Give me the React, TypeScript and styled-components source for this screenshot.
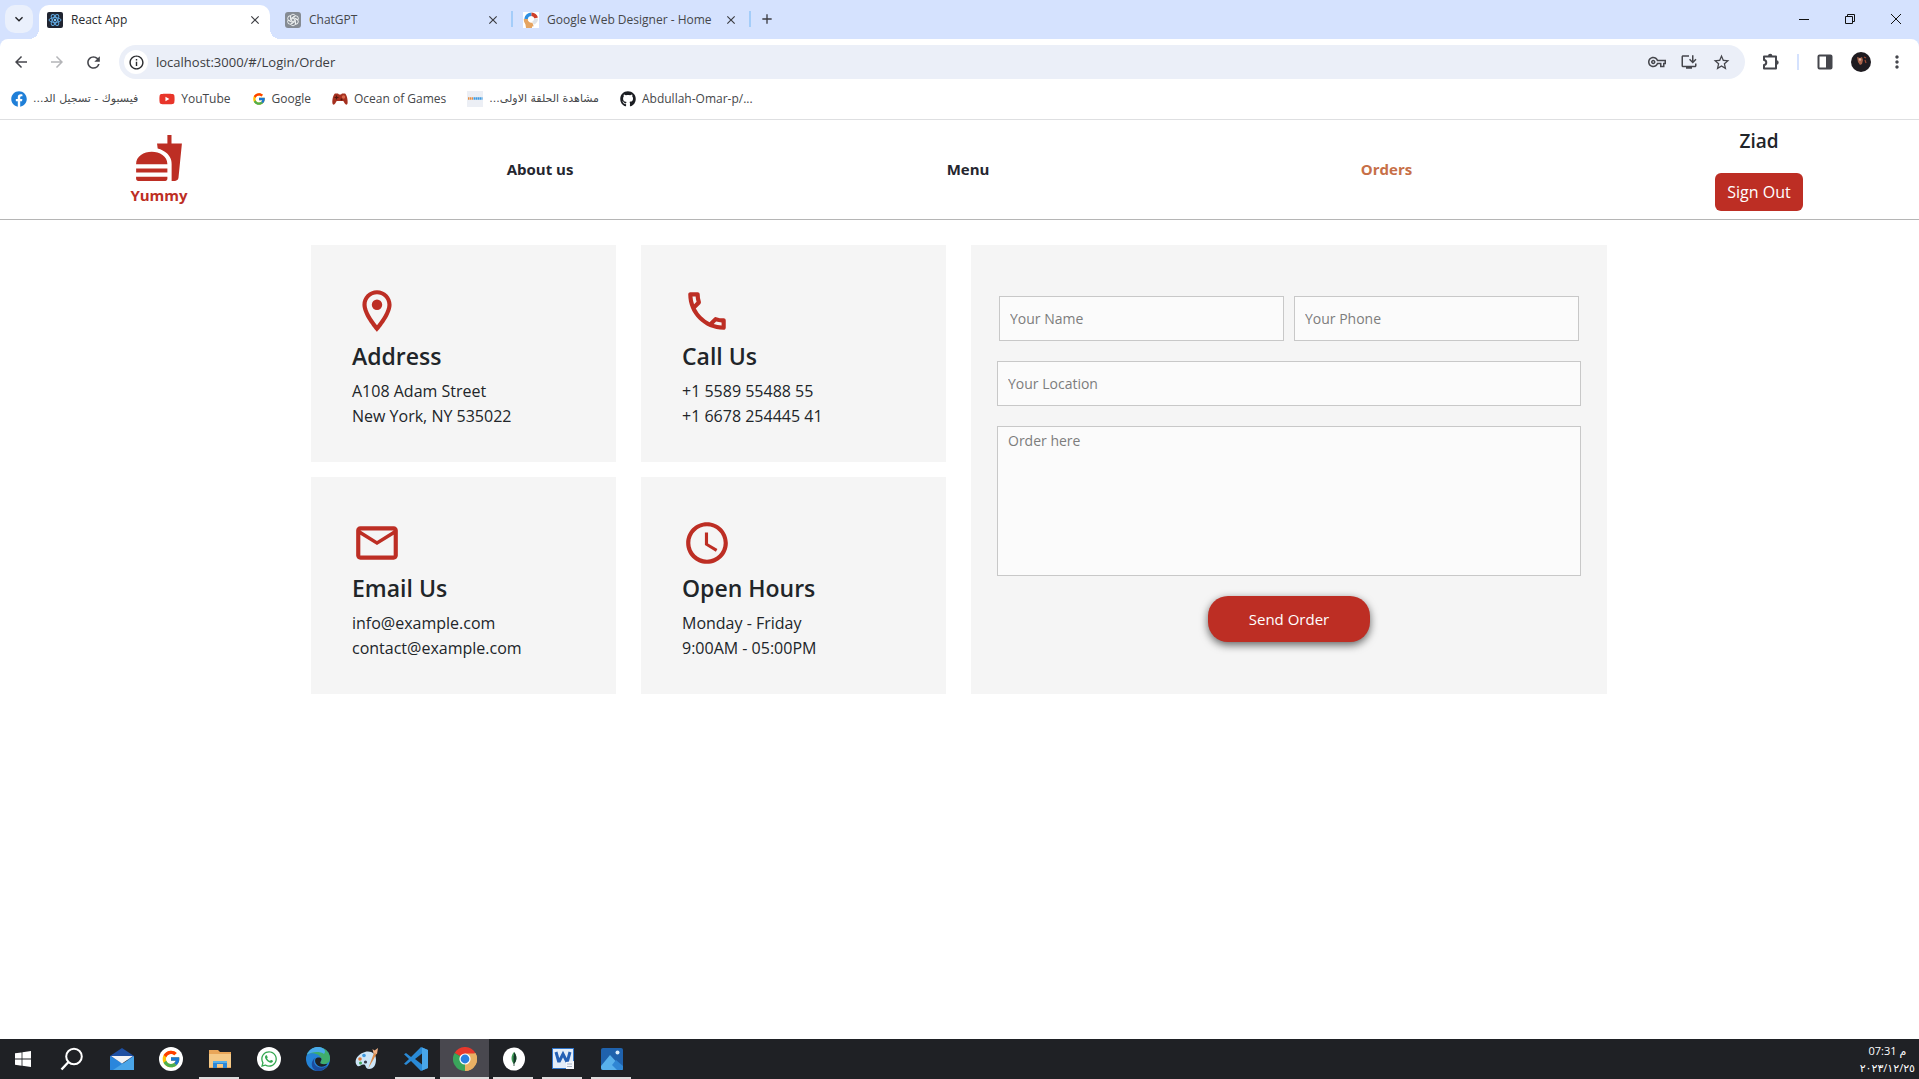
import React from "react";
import styled, { createGlobalStyle, css } from "styled-components";
import {
  MdArrowBack,
  MdArrowForward,
  MdRefresh,
  MdInfoOutline,
  MdKeyboardArrowDown,
  MdClose,
  MdAdd,
  MdStarOutline,
  MdMoreVert,
  MdFastfood,
  MdOutlineLocationOn,
  MdOutlinePhone,
  MdOutlineEmail,
  MdAccessTime,
  MdOutlineVpnKey,
  MdOutlineInstallDesktop,
} from "react-icons/md";
import { FaWhatsapp, FaFacebook, FaYoutube, FaGithub } from "react-icons/fa";
import { FcGoogle } from "react-icons/fc";

const red = "#bd2e24";
const ink = "#212529";
const panel = "#f5f5f5";
const sans = `"Segoe UI", "Open Sans", "Noto Sans", "DejaVu Sans", sans-serif`;

const GlobalStyle = createGlobalStyle`
  * { box-sizing: border-box; }
  body { margin: 0; background: #fff; font-family: ${sans}; color: ${ink}; }
  button, input, textarea { font-family: inherit; margin: 0; }
  button { border: 0; padding: 0; background: none; color: inherit; cursor: pointer; }
  h1, h2, p { margin: 0; }
  a { color: inherit; text-decoration: none; }
  svg { display: block; flex: none; }
`;

const Screen = styled.div`
  display: flex;
  flex-direction: column;
  min-height: 100vh;
`;

/* ---------- browser window ---------- */

const TabStrip = styled.div`
  display: flex;
  height: 39px;
  padding: 5px 0 0 5px;
  background: #d5e2fe;
`;

const TabSearch = styled.button`
  display: grid;
  place-items: center;
  width: 28px;
  height: 28px;
  margin-right: 6px;
  border-radius: 10px;
  background: #eaf0fc;
  color: #202124;
`;

const Tab = styled.div<{ $active?: boolean }>`
  position: relative;
  display: flex;
  align-items: center;
  gap: 8px;
  width: 231px;
  height: 34px;
  padding: 0 7px 5px 8px;
  border-radius: 10px 10px 0 0;
  font-size: 12px;
  color: #45474a;
  ${(p) =>
    p.$active &&
    css`
      background: #fff;
      color: #2a2b2e;
      &::before,
      &::after {
        content: "";
        position: absolute;
        bottom: 0;
        width: 10px;
        height: 10px;
      }
      &::before {
        left: -10px;
        background: radial-gradient(circle at 0 0, transparent 10px, #fff 10px);
      }
      &::after {
        right: -10px;
        background: radial-gradient(circle at 100% 0, transparent 10px, #fff 10px);
      }
    `}
`;

const TabTitle = styled.span`
  flex: 1;
  white-space: nowrap;
`;

const TabClose = styled.button`
  display: grid;
  place-items: center;
  width: 16px;
  height: 16px;
  color: #3c3d42;
`;

const TabGap = styled.span<{ $line?: boolean }>`
  width: 2px;
  height: 16px;
  margin: 6px 2px 0 3px;
  background: ${(p) => (p.$line ? "#a4cdf9" : "transparent")};
`;

const NewTab = styled.button`
  display: grid;
  place-items: center;
  width: 28px;
  height: 28px;
  color: #3c3d42;
`;

const WindowButtons = styled.div`
  display: flex;
  margin-left: auto;
  button {
    display: grid;
    place-items: center;
    width: 46px;
    height: 28px;
  }
`;

const ToolbarBack = styled.div`
  background: #d5e2fe;
`;

const Toolbar = styled.div`
  display: flex;
  align-items: center;
  height: 46px;
  padding-left: 3px;
  padding-right: 4px;
  border-radius: 8px 8px 0 0;
  background: #fff;
`;

const ToolButton = styled.button<{ $faded?: boolean }>`
  display: grid;
  place-items: center;
  width: 36px;
  height: 34px;
  color: ${(p) => (p.$faded ? "#b4b5b8" : "#45464c")};
`;

const Omnibox = styled.form`
  display: flex;
  flex: 1;
  align-items: center;
  height: 34px;
  margin: 0 8px;
  padding: 0 8px 0 5px;
  border-radius: 17px;
  background: #ebeff8;
`;

const SiteInfo = styled.button`
  display: grid;
  place-items: center;
  width: 24px;
  height: 24px;
  border-radius: 50%;
  background: #fff;
  color: #2a2b2e;
`;

const Url = styled.input`
  flex: 1;
  min-width: 0;
  padding: 0 8px;
  border: 0;
  outline: 0;
  background: none;
  font-size: 13px;
  color: #3c3d42;
`;

const OmniButton = styled(ToolButton)`
  width: 32px;
`;

const ToolLine = styled.span`
  width: 2px;
  height: 16px;
  margin: 0 8px;
  background: #d5e2fe;
`;

const Bookmarks = styled.nav`
  display: flex;
  align-items: center;
  gap: 21px;
  height: 35px;
  padding: 0 11px 6px;
  border-bottom: 1px solid #dedfe1;
`;

const Bookmark = styled.a`
  display: flex;
  align-items: center;
  gap: 6px;
  font-size: 12px;
  line-height: 16px;
  color: #45474a;
  white-space: nowrap;
`;

const ArabicLabel = styled.span`
  font-family: "DejaVu Sans", sans-serif;
  font-size: 11px;
`;

/* ---------- site header ---------- */

const Header = styled.header`
  display: grid;
  grid-template-columns: 318fr 444fr 412fr 425fr 320fr;
  align-items: center;
  justify-items: center;
  height: 100px;
  border-bottom: 1px solid #b5b5b5;
`;

const Brand = styled.a`
  display: flex;
  flex-direction: column;
  align-items: center;
  font-size: 15px;
  line-height: 24px;
  font-weight: 700;
  color: ${red};
`;

const NavLink = styled.a<{ $active?: boolean }>`
  padding-bottom: 2px;
  font-size: 15px;
  line-height: 24px;
  font-weight: 700;
  color: ${(p) => (p.$active ? "#c76f47" : "#25262f")};
`;

const Account = styled.div`
  display: flex;
  flex-direction: column;
  align-items: center;
  gap: 20px;
`;

const UserName = styled.span`
  font-size: 19px;
  line-height: 24px;
  font-weight: 600;
`;

const SignOut = styled.button`
  height: 38px;
  padding: 0 12px;
  border-radius: 6px;
  background: ${red};
  color: #fff;
  font-size: 16px;
`;

/* ---------- contact page ---------- */

const Main = styled.main`
  flex: 1;
  width: 100%;
  max-width: 1297px;
  margin: 0 auto;
  padding: 25px 1px 25px 0;
`;

const Columns = styled.div`
  display: grid;
  grid-template-columns: 635fr 636fr;
  gap: 25px;
`;

const Cards = styled.div`
  display: grid;
  grid-template-columns: 1fr 1fr;
  gap: 15px 25px;
`;

const Card = styled.section`
  padding: 41px 41px 33px;
  background: ${panel};
`;

const CardIcon = styled.div`
  color: ${red};
`;

const CardTitle = styled.h2`
  margin: 4px 0 6px;
  font-size: 23px;
  line-height: 33px;
  font-weight: 600;
`;

const CardText = styled.p`
  font-size: 16px;
  line-height: 25px;
`;

const OrderForm = styled.form`
  display: flex;
  flex-direction: column;
  gap: 20px;
  padding: 51px 26px;
  background: ${panel};
`;

const FieldPair = styled.div`
  display: grid;
  grid-template-columns: 1fr 1fr;
  gap: 10px;
  padding: 0 2px;
`;

const fieldLook = css`
  width: 100%;
  border: 1px solid #c8c8c8;
  border-radius: 0;
  outline: 0;
  background: #fbfbfb;
  color: ${ink};
  font-size: 14px;
  &::placeholder {
    color: #7d7d7d;
    opacity: 1;
  }
`;

const Field = styled.input`
  ${fieldLook}
  height: 45px;
  padding: 0 10px;
`;

const OrderText = styled.textarea`
  ${fieldLook}
  display: block;
  height: 150px;
  padding: 2px 10px;
  line-height: 24px;
  resize: none;
`;

const SendButton = styled.button`
  align-self: center;
  height: 46px;
  padding: 0 41px;
  border-radius: 20px;
  background: ${red};
  color: #fff;
  font-size: 15px;
  box-shadow: 0 3px 8px rgba(0, 0, 0, 0.6);
`;

/* ---------- desktop task bar ---------- */

const TaskBar = styled.footer`
  display: flex;
  height: 40px;
  background: #1f2125;
  color: #fff;
`;

const TaskButton = styled.button<{ $open?: boolean; $focus?: boolean }>`
  position: relative;
  display: grid;
  place-items: center;
  width: 49px;
  height: 40px;
  background: ${(p) => (p.$focus ? "#49484f" : "none")};
  &:first-child {
    width: 46px;
  }
  &:nth-child(2) {
    width: 51px;
  }
  ${(p) =>
    p.$open &&
    css`
      &::after {
        content: "";
        position: absolute;
        bottom: 0;
        left: ${p.$focus ? 0 : 4}px;
        right: ${p.$focus ? 0 : 5}px;
        height: 2px;
        background: #dcdcdc;
      }
    `}
`;

const Clock = styled.time`
  display: flex;
  flex-direction: column;
  align-items: center;
  justify-content: center;
  margin-left: auto;
  padding-right: 4px;
  font-family: "Open Sans", "DejaVu Sans", sans-serif;
  font-size: 11px;
  line-height: 17px;
`;

/* ---------- drawings ---------- */

const ReactMark = () => (
  <svg width="16" height="16" viewBox="0 0 16 16">
    <rect width="16" height="16" rx="2" fill="#1f2430" />
    <g fill="none" stroke="#5fa8e0">
      <ellipse cx="8" cy="8" rx="6" ry="2.4" />
      <ellipse cx="8" cy="8" rx="6" ry="2.4" transform="rotate(60 8 8)" />
      <ellipse cx="8" cy="8" rx="6" ry="2.4" transform="rotate(120 8 8)" />
    </g>
    <circle cx="8" cy="8" r="1.2" fill="#8cc8f0" />
  </svg>
);

const ChatMark = () => (
  <svg width="16" height="16" viewBox="0 0 16 16">
    <rect width="16" height="16" rx="3" fill="#858b93" />
    <g fill="none" stroke="#eef1f0" strokeWidth="0.9">
      {[0, 60, 120, 180, 240, 300].map((a) => (
        <path key={a} d="M8 5.2 L10.4 3.8 A2.6 2.6 0 0 0 5.6 4 V8.2 L8 9.6" transform={`rotate(${a} 8 8)`} />
      ))}
    </g>
  </svg>
);

const DesignerMark = () => (
  <svg width="16" height="16" viewBox="0 0 16 16">
    <rect width="16" height="16" fill="#fff" />
    <g fill="none" strokeWidth="3.6">
      <path d="M8.5 2.2 A5.6 5.6 0 0 0 3 7" stroke="#2f8fe0" />
      <path d="M8.5 2.2 A5.2 5.2 0 0 1 13.2 6" stroke="#cf3f2a" />
      <path d="M13.2 6.4 A5 5 0 0 1 10 11" stroke="#dfe2e6" />
      <path d="M2.8 7 A5.4 5.4 0 0 0 10 12.4" stroke="#e5a461" strokeWidth="4" />
    </g>
    <path d="M2 9 L9 12 V16 H3z" fill="#e5a461" />
  </svg>
);

const GamepadMark = () => (
  <svg width="16" height="16" viewBox="0 0 16 16">
    <path d="M3 2.5h3l1 1h2l1-1h3c1.600 1 3 6 2.600 9.500-.2 2-1.800 2.200-2.800.6L11.300 10H4.700l-1.500 2.600c-1 1.600-2.600 1.400-2.800-.6C0 8.500 1.400 3.500 3 2.500z" fill="#a5301f" />
    <path d="M4.500 4.500v4M2.500 6.500h4" stroke="#54160e" strokeWidth="1.200" />
    <circle cx="11.500" cy="6" r="1.700" fill="#d9694c" />
    <circle cx="9.500" cy="8.500" r="1" fill="#54160e" />
  </svg>
);

const FilmMark = () => (
  <svg width="16" height="16" viewBox="0 0 16 16">
    <rect width="16" height="16" fill="#eceff5" />
    <path d="M1 7.500h5" stroke="#e58f45" strokeWidth="2.400" strokeDasharray="1.500 .5" />
    <path d="M6.500 7.500h9" stroke="#3f9be0" strokeWidth="2.400" strokeDasharray="1.700 .4" />
  </svg>
);

const Minimise = () => (
  <svg width="10" height="10" viewBox="0 0 10 10" stroke="#111" fill="none">
    <path d="M0 5.500h10" />
  </svg>
);

const Restore = () => (
  <svg width="10" height="10" viewBox="0 0 10 10" stroke="#111" fill="none">
    <path d="M.5 2.500h7v7h-7zM2.500 2.500v-2h7v7h-2" />
  </svg>
);

const CloseWindow = () => (
  <svg width="10" height="10" viewBox="0 0 10 10" stroke="#111" fill="none">
    <path d="M0 0l10 10M10 0L0 10" />
  </svg>
);

const Puzzle = () => (
  <svg width="18" height="18" viewBox="0 0 18 18">
    <path
      d="M2 3.500h12v12H2v-3.500c3-.3 3-4.700 0-5z"
      fill="none"
      stroke="#45464c"
      strokeWidth="2"
      strokeLinejoin="round"
    />
    <path d="M6 3a2.200 2.200 0 0 1 4.400 0zM14.500 7.300a2.200 2.200 0 0 1 0 4.400z" fill="#45464c" />
  </svg>
);

const SidePanel = () => (
  <svg width="16" height="16" viewBox="0 0 16 16">
    <rect x="1.500" y="1.500" width="13" height="13" rx="1" fill="none" stroke="#45464c" strokeWidth="2" />
    <path d="M9 1.500h5.500v13H9z" fill="#45464c" />
  </svg>
);

const Avatar = () => (
  <svg width="20" height="20" viewBox="0 0 20 20">
    <circle cx="10" cy="10" r="10" fill="#1e1b20" />
    <path d="M6 5l3 1 2-1 1 3-1 4-2 1-2-3z" fill="#a8644c" />
    <path d="M13 5l2 1M14 8l1 3" stroke="#a04a34" strokeWidth="1.200" />
    <circle cx="9" cy="7.500" r="1.200" fill="#d9b3a0" />
  </svg>
);

const WindowsMark = () => (
  <svg width="16" height="16" viewBox="0 0 16 16" fill="#fff">
    <path d="M0 2.300L6.600 1.400V7.600H0zM7.400 1.300L16 0v7.600H7.400zM0 8.400h6.600v6.300L0 13.800zM7.400 8.400H16V16l-8.600-1.200z" />
  </svg>
);

const SearchMark = () => (
  <svg width="24" height="24" viewBox="0 0 24 24" fill="none" stroke="#fff" strokeWidth="2">
    <circle cx="14" cy="9.500" r="7.800" />
    <path d="M8.500 15L1.500 22.500" strokeWidth="2.400" />
  </svg>
);

const MailApp = () => (
  <svg width="24" height="24" viewBox="0 0 24 24">
    <path d="M0 9L12 1l12 8v4H0z" fill="#1d4fa3" />
    <path d="M0 9v14h24z" fill="#2a86dc" />
    <path d="M24 9v14H3z" fill="#4aa5e8" />
    <path d="M1 9h22l-11 7.500z" fill="#f1f3f7" />
  </svg>
);

const RoundApp = styled.span`
  display: grid;
  place-items: center;
  width: 24px;
  height: 24px;
  border-radius: 50%;
  background: #fff;
`;

const Folder = () => (
  <svg width="22" height="20" viewBox="0 0 22 20">
    <path d="M0 1h9l2 2h11v16H0z" fill="#e9a659" />
    <path d="M0 5h22v13H0z" fill="#f5c987" />
    <path d="M4 12h14v7h-4v-4H8v4H4z" fill="#2d88d8" />
    <path d="M4 12h14v2H4z" fill="#57b0ec" />
  </svg>
);

const EdgeMark = () => (
  <svg width="24" height="24" viewBox="0 0 24 24">
    <circle cx="12" cy="12" r="12" fill="#2483d6" />
    <path d="M1 7.500C4 1 11-1.500 17.500 1.500 23 4 25 9.500 23.500 14c-1.200 3-6 4-9 2.500-1.500-.8 1.500-1.800 1-4.500C14.500 7 6.500 4.500 1 7.500z" fill="#3fae6c" />
    <path d="M1 7.500C4 1 10-1 15 .5c4 1.500 5 4 3 6.500-4-3-12-2.500-17 .5z" fill="#4aabea" />
    <path d="M9 11c-2.500 4 0 9 5 9.500 3 .3 5.500-.5 7.500-2-2 3.500-5.500 5.500-9.500 5.500C7 23.500 5 19 6 15.500c.5-2 1.500-3.500 3-4.500z" fill="#1c4c9e" />
    <path d="M15.500 12c0 2-1.800 3-1 4.500 2 1 5 .8 7 .2-2 2.800-6 4-9.500 2-3-2-3.500-5-2.500-7 1.500-1.500 5-2 6 .3z" fill="#1f2125" />
  </svg>
);

const PaintMark = () => (
  <svg width="24" height="24" viewBox="0 0 24 24">
    <path d="M10 5c6-1.500 11 1.500 11 7.500 0 5-2 9.500-7 9.500-4 0-2.500-4-5-4.500C6 17 5 20 2.500 19-2 15 2 7 10 5z" fill="#cde6f8" />
    <circle cx="5" cy="12" r="1.800" fill="#e07a3c" />
    <circle cx="9" cy="8.500" r="1.800" fill="#3f9be0" />
    <circle cx="5.500" cy="16" r="1.500" fill="#45a85e" />
    <circle cx="10.500" cy="15" r="1.600" fill="#3a3d4a" />
    <path d="M13 22L19 6l2.500 1z" fill="#d98a4a" />
    <path d="M17.500 2l2 1.500L23 1l-1 6-3.500-.5z" fill="#f0b184" />
  </svg>
);

const CodeMark = () => (
  <svg width="24" height="24" viewBox="0 0 24 24">
    <path d="M17 0l7 3v18l-7 3L7 14l-5 4-2-1.200L5 12 0 7.200 2 6l5 4zM18 6.500L11 12l7 5.500z" fill="#2a8ad6" fillRule="evenodd" />
    <path d="M18 .5l6 2.500v18l-6 2.500z" fill="#48a6ea" />
  </svg>
);

const ChromeMark = () => (
  <svg width="24" height="24" viewBox="0 0 24 24">
    <path d="M12 12L1.600 6A12 12 0 0 1 22.400 6z" fill="#e8382c" />
    <path d="M12 12L22.400 6A12 12 0 0 1 12 24z" fill="#e9b064" />
    <path d="M12 12L12 24A12 12 0 0 1 1.600 6z" fill="#3aa55b" />
    <path d="M12 6.500h10.700A12 12 0 0 1 12 24l4.800-9z" fill="#e9b064" />
    <circle cx="12" cy="12" r="5.600" fill="#fff" />
    <circle cx="12" cy="12" r="4.400" fill="#2a7fe0" />
  </svg>
);

const LeafMark = () => (
  <svg width="22" height="24" viewBox="0 0 22 24">
    <ellipse cx="11" cy="12" rx="11" ry="11.500" fill="#fff" />
    <path d="M11 5c3.500 4 3 9-.2 12-2.800-3-3.300-8 .2-12z" fill="#3e9a56" />
    <path d="M11 5c3.500 4 3 9-.2 12z" fill="#17382a" />
    <path d="M11 9v10" stroke="#17382a" strokeWidth="0.800" />
  </svg>
);

const WordMark = () => (
  <svg width="22" height="22" viewBox="0 0 22 22">
    <rect width="22" height="21" fill="#2f74c8" />
    <path d="M1 1h20v19H1z" fill="#e3edf8" />
    <path d="M4 4l2.500 9h1L11 6l3.500 7h1L18 4" fill="none" stroke="#2460b4" strokeWidth="3" />
    <path d="M14 14l8-1v8h-8z" fill="#f4f7fb" />
    <path d="M15 16h5M15 18.500h5" stroke="#a9b6c8" />
  </svg>
);

const PhotosMark = () => (
  <svg width="22" height="22" viewBox="0 0 22 22">
    <rect width="22" height="22" rx="2" fill="#1f62ad" />
    <path d="M0 18L9 7l13 14a2 2 0 0 1-2 1H2a2 2 0 0 1-2-2z" fill="#58b1ec" />
    <path d="M11 17l4-5 7 6v2a2 2 0 0 1-2 2h-4z" fill="#2f86d4" />
    <circle cx="16.500" cy="4.500" r="2" fill="#dcecfa" />
  </svg>
);

/* ---------- content ---------- */

const tabs = [
  { title: "React App", icon: <ReactMark />, active: true },
  { title: "ChatGPT", icon: <ChatMark />, line: true },
  { title: "Google Web Designer - Home", icon: <DesignerMark />, line: true },
];

const cards = [
  { title: "Address", Icon: MdOutlineLocationOn, lines: ["A108 Adam Street", "New York, NY 535022"] },
  { title: "Call Us", Icon: MdOutlinePhone, lines: ["+1 5589 55488 55", "+1 6678 254445 41"] },
  { title: "Email Us", Icon: MdOutlineEmail, lines: ["info@example.com", "contact@example.com"] },
  { title: "Open Hours", Icon: MdAccessTime, lines: ["Monday - Friday", "9:00AM - 05:00PM"] },
];

const tasks: { name: string; icon: React.ReactNode; open?: boolean; focus?: boolean }[] = [
  { name: "Start", icon: <WindowsMark /> },
  { name: "Search", icon: <SearchMark /> },
  { name: "Mail", icon: <MailApp /> },
  { name: "Google", icon: <RoundApp><FcGoogle size={20} /></RoundApp> },
  { name: "File Explorer", icon: <Folder />, open: true },
  { name: "WhatsApp", icon: <RoundApp><FaWhatsapp size={18} color="#35a852" /></RoundApp> },
  { name: "Edge", icon: <EdgeMark /> },
  { name: "Paint", icon: <PaintMark /> },
  { name: "Visual Studio Code", icon: <CodeMark />, open: true },
  { name: "Chrome", icon: <ChromeMark />, open: true, focus: true },
  { name: "MongoDB Compass", icon: <LeafMark />, open: true },
  { name: "Word", icon: <WordMark />, open: true },
  { name: "Photos", icon: <PhotosMark />, open: true },
];

function BrowserChrome() {
  return (
    <>
      <TabStrip>
        <TabSearch aria-label="Search tabs"><MdKeyboardArrowDown size={16} /></TabSearch>
        {tabs.map((t) => (
          <React.Fragment key={t.title}>
            <Tab $active={t.active}>
              {t.icon}
              <TabTitle>{t.title}</TabTitle>
              <TabClose aria-label={`Close ${t.title}`}><MdClose size={14} /></TabClose>
            </Tab>
            <TabGap $line={t.line} />
          </React.Fragment>
        ))}
        <NewTab aria-label="New tab"><MdAdd size={16} /></NewTab>
        <WindowButtons>
          <button aria-label="Minimise"><Minimise /></button>
          <button aria-label="Restore"><Restore /></button>
          <button aria-label="Close window"><CloseWindow /></button>
        </WindowButtons>
      </TabStrip>
      <ToolbarBack>
        <Toolbar>
          <ToolButton aria-label="Back"><MdArrowBack size={18} /></ToolButton>
          <ToolButton aria-label="Forward" $faded><MdArrowForward size={18} /></ToolButton>
          <ToolButton aria-label="Reload"><MdRefresh size={19} /></ToolButton>
          <Omnibox onSubmit={(e) => e.preventDefault()}>
            <SiteInfo type="button" aria-label="Site information"><MdInfoOutline size={17} /></SiteInfo>
            <Url aria-label="Address" defaultValue="localhost:3000/#/Login/Order" />
            <OmniButton type="button" aria-label="Passwords"><MdOutlineVpnKey size={18} /></OmniButton>
            <OmniButton type="button" aria-label="Install"><MdOutlineInstallDesktop size={18} /></OmniButton>
            <OmniButton type="button" aria-label="Bookmark"><MdStarOutline size={19} /></OmniButton>
          </Omnibox>
          <ToolButton aria-label="Extensions"><Puzzle /></ToolButton>
          <ToolLine />
          <ToolButton aria-label="Side panel"><SidePanel /></ToolButton>
          <ToolButton aria-label="Profile"><Avatar /></ToolButton>
          <ToolButton aria-label="More"><MdMoreVert size={20} /></ToolButton>
        </Toolbar>
      </ToolbarBack>
      <Bookmarks aria-label="Bookmarks">
        <Bookmark href="#facebook"><FaFacebook size={16} color="#1f7fd8" /><ArabicLabel dir="rtl">فيسبوك - تسجيل الد...</ArabicLabel></Bookmark>
        <Bookmark href="#youtube"><FaYoutube size={16} color="#e8352a" />YouTube</Bookmark>
        <Bookmark href="#google"><FcGoogle size={14} />Google</Bookmark>
        <Bookmark href="#games"><GamepadMark />Ocean of Games</Bookmark>
        <Bookmark href="#film"><FilmMark /><ArabicLabel dir="rtl">مشاهدة الحلقة الاولى...</ArabicLabel></Bookmark>
        <Bookmark href="#github"><FaGithub size={16} color="#1b1d22" />Abdullah-Omar-p/...</Bookmark>
      </Bookmarks>
    </>
  );
}

export default function App() {
  return (
    <Screen>
      <GlobalStyle />
      <BrowserChrome />
      <Header>
        <Brand href="#home"><MdFastfood size={50} />Yummy</Brand>
        <NavLink href="#about">About us</NavLink>
        <NavLink href="#menu">Menu</NavLink>
        <NavLink href="#orders" $active>Orders</NavLink>
        <Account>
          <UserName>Ziad</UserName>
          <SignOut>Sign Out</SignOut>
        </Account>
      </Header>
      <Main>
        <Columns>
          <Cards>
            {cards.map(({ title, Icon, lines }) => (
              <Card key={title}>
                <CardIcon><Icon size={50} /></CardIcon>
                <CardTitle>{title}</CardTitle>
                {lines.map((line) => (
                  <CardText key={line}>{line}</CardText>
                ))}
              </Card>
            ))}
          </Cards>
          <OrderForm onSubmit={(e) => e.preventDefault()}>
            <FieldPair>
              <Field type="text" aria-label="Your Name" placeholder="Your Name" />
              <Field type="tel" aria-label="Your Phone" placeholder="Your Phone" />
            </FieldPair>
            <Field type="text" aria-label="Your Location" placeholder="Your Location" />
            <OrderText aria-label="Order here" placeholder="Order here" />
            <SendButton type="submit">Send Order</SendButton>
          </OrderForm>
        </Columns>
      </Main>
      <TaskBar>
        {tasks.map((t) => (
          <TaskButton key={t.name} aria-label={t.name} $open={t.open} $focus={t.focus}>{t.icon}</TaskButton>
        ))}
        <Clock>
          <span>07:31 م</span>
          <span>٢٠٢٣/١٢/٢٥</span>
        </Clock>
      </TaskBar>
    </Screen>
  );
}
